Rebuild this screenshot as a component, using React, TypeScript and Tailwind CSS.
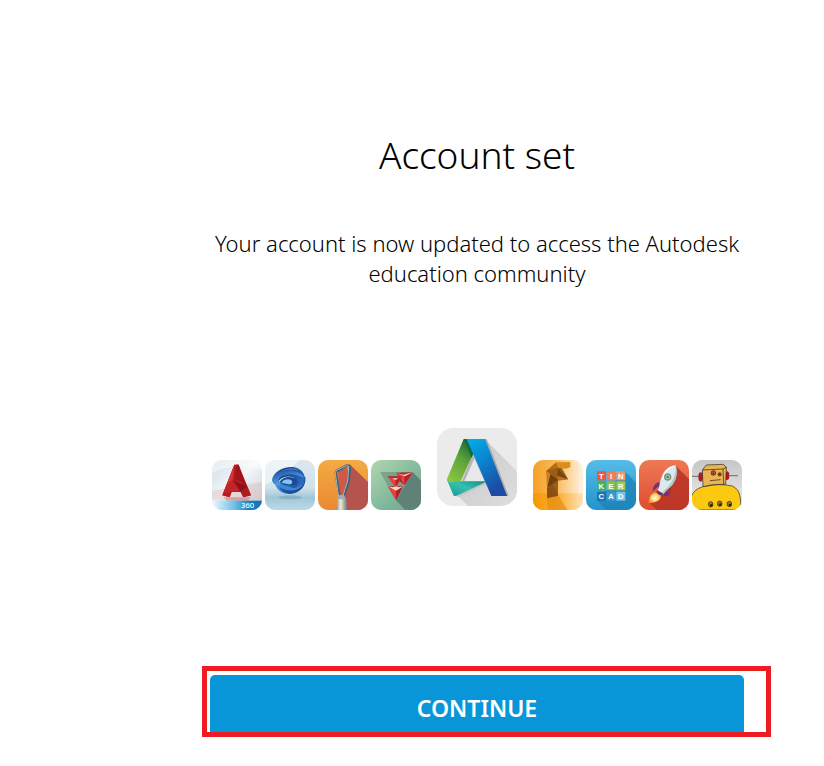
import { FC, ReactNode, useState } from 'react';

type TileProps = {
  id: string;
  label: string;
  children: ReactNode;
};

const Tile: FC<TileProps> = ({ id, label, children }) => (
  <svg
    viewBox="0 0 150 150"
    role="img"
    aria-label={label}
    className="block size-[50px] shrink-0"
  >
    <clipPath id={`${id}-clip`}>
      <rect width="150" height="150" rx="30" />
    </clipPath>
    <g clipPath={`url(#${id}-clip)`}>{children}</g>
  </svg>
);

const Autocad: FC = () => (
  <Tile id="acad" label="AutoCAD 360">
    <linearGradient id="acad-bg" x1="0" y1="0" x2="1" y2="1">
      <stop offset="0" stopColor="#cfdce3" />
      <stop offset="0.45" stopColor="#f4f8fa" />
      <stop offset="1" stopColor="#c3cdd3" />
    </linearGradient>
    <linearGradient id="acad-bar" x1="0" x2="1">
      <stop offset="0" stopColor="#f0faff" />
      <stop offset="0.45" stopColor="#6cbfe6" />
      <stop offset="0.75" stopColor="#1a80bd" />
      <stop offset="1" stopColor="#1773b0" />
    </linearGradient>
    <linearGradient id="acad-a" x1="0" x2="1" y2="1">
      <stop offset="0" stopColor="#d2282c" />
      <stop offset="1" stopColor="#8f1017" />
    </linearGradient>
    <rect width="150" height="150" fill="url(#acad-bg)" />
    <path d="M0 40Q60 5 150 30V0H0Z" fill="#fff" opacity=".45" />
    <path d="M0 92L150 66V122H0Z" fill="#dfb6ba" opacity=".4" />
    <path d="M35 112H116L108 122H44Z" fill="#c7565b" opacity=".4" />
    <path d="M67 14H80L117 106L94 112L86 96H59L53 112L31 106Z" fill="url(#acad-a)" />
    <path d="M67 14L31 106L53 112L58 97L92 78L80 14Z" fill="#b81c22" />
    <path d="M67 14L62 60L44 74Z" fill="#d5363a" />
    <path d="M73 14L68 56L96 68L80 14Z" fill="#a1141a" />
    <path d="M44 74L62 60L106 80L110 92L60 96L34 100Z" fill="#c3242a" />
    <path d="M62 60L106 80L86 96Z" fill="#8d1118" />
    <path d="M106 80L117 106L94 112L86 96Z" fill="#b01a21" />
    <rect y="122" width="150" height="28" fill="url(#acad-bar)" />
    <text
      x="87"
      y="144"
      fill="#fff"
      fontSize="23"
      fontFamily="'Noto Sans', sans-serif"
      fontWeight="500"
    >
      360
    </text>
  </Tile>
);

const Swirl: FC = () => (
  <Tile id="swirl" label="A360">
    <linearGradient id="swirl-bg" x1="0" y1="0" x2="0" y2="1">
      <stop offset="0" stopColor="#dce7ed" />
      <stop offset="0.55" stopColor="#d1e2ea" />
      <stop offset="0.75" stopColor="#a3c6d7" />
      <stop offset="1" stopColor="#b9dae8" />
    </linearGradient>
    <linearGradient id="swirl-top" x1="0" y1="0" x2="1" y2="0.4">
      <stop offset="0" stopColor="#2f74c6" />
      <stop offset="0.45" stopColor="#153f8c" />
      <stop offset="1" stopColor="#2a69bd" />
    </linearGradient>
    <linearGradient id="swirl-low" x1="0" y1="0" x2="1" y2="0">
      <stop offset="0" stopColor="#4c97dc" />
      <stop offset="0.5" stopColor="#2363b6" />
      <stop offset="1" stopColor="#11336f" />
    </linearGradient>
    <linearGradient id="swirl-left" x1="0" y1="0" x2="0.6" y2="1">
      <stop offset="0" stopColor="#1a4a9a" />
      <stop offset="0.6" stopColor="#3f8bd8" />
      <stop offset="1" stopColor="#77b8ee" />
    </linearGradient>
    <rect width="150" height="150" fill="url(#swirl-bg)" />
    <path d="M0 75Q50 55 104 0H0Z" fill="#fff" opacity=".5" />
    <ellipse cx="75" cy="112" rx="36" ry="6" fill="#5d91b2" opacity=".4" />
    <path
      d="M30 72C38 62 106 44 121 52C124 76 107 99 77 102C52 103 36 91 30 72Z"
      fill="url(#swirl-low)"
    />
    <path
      d="M22 61C22 40 48 21 82 21C108 23 124 42 119 66C112 80 98 86 86 84C98 77 101 66 94 57C82 47 54 46 42 62C36 68 41 74 49 76C33 77 23 71 22 61Z"
      fill="url(#swirl-top)"
    />
    <path
      d="M22 61C22 45 43 31 70 31C92 31 110 39 116 53C100 43 69 39 51 49C39 55 36 68 49 76C33 77 23 71 22 61Z"
      fill="url(#swirl-left)"
    />
    <path d="M45 66C51 50 82 46 93 59C98 70 88 77 73 76C59 77 48 72 45 66Z" fill="#184994" />
    <path d="M50 68C58 54 80 56 82 66C82 73 71 75 65 71C58 69 53 70 50 68Z" fill="#86c3f0" />
    <path d="M42 78C56 71 72 82 84 84C96 84 111 77 119 65C111 83 95 94 75 93C60 92 49 87 42 78Z" fill="#3f86d0" />
    <path d="M43 82C57 93 91 98 112 79C103 95 86 102 71 100C58 98 48 92 43 82Z" fill="#1b4f9f" />
    <path d="M51 33C66 23 91 22 103 32C88 29 67 28 51 33Z" fill="#3f80c9" />
  </Tile>
);

const Mudbox: FC = () => (
  <Tile id="tool" label="Mudbox">
    <linearGradient id="tool-bg" x1="0" y1="0" x2="0" y2="1">
      <stop offset="0" stopColor="#f4aa43" />
      <stop offset="1" stopColor="#e98a31" />
    </linearGradient>
    <linearGradient id="tool-grip" x1="0" x2="1">
      <stop offset="0" stopColor="#8b9392" />
      <stop offset="0.4" stopColor="#edebd5" />
      <stop offset="1" stopColor="#6d7a81" />
    </linearGradient>
    <rect width="150" height="150" fill="url(#tool-bg)" />
    <path d="M95 13L150 66V150H83L62 106Z" fill="#b5534f" />
    <path d="M60 32L89 20L85 69L74 111L63 103Z" fill="#cf5a4b" />
    <path
      d="M66 118L54 41Q53 34 61 30L86 17Q96 14 95 26L92 63L74 118"
      fill="none"
      stroke="#425f73"
      strokeWidth="8"
      strokeLinejoin="round"
    />
    <path
      d="M63 116L52 41Q52 32 59 29L86 17Q93 15 92 24L89 63L72 116"
      fill="none"
      stroke="#a9b9b1"
      strokeWidth="3"
      strokeLinejoin="round"
    />
    <path d="M59 117Q71 110 85 117L87 150H55Z" fill="url(#tool-grip)" />
    <path d="M62 106Q71 102 79 106L83 118H60Z" fill="#a5aeaa" />
  </Tile>
);

const ForceEffect: FC = () => (
  <Tile id="tri" label="ForceEffect">
    <linearGradient id="tri-bg" x1="0" y1="0" x2="1" y2="1">
      <stop offset="0" stopColor="#b3d6ad" />
      <stop offset="0.5" stopColor="#87bca0" />
      <stop offset="1" stopColor="#68a18d" />
    </linearGradient>
    <rect width="150" height="150" fill="url(#tri-bg)" />
    <path d="M126 37L150 62V150H103L75 121Z" fill="#5f8177" />
    <path d="M27 36H119L76 121Z" fill="#65867b" opacity=".55" />
    <path d="M77 38L126 37L101 76L87 64Z" fill="#b42029" />
    <path d="M77 38L99 50L126 37L96 44Z" fill="#f4c1ae" />
    <path d="M77 38L100 49L101 76Z" fill="#e44439" />
    <path d="M50 49H94L74 83Z" fill="#be202b" />
    <path d="M50 49L73 60L74 83Z" fill="#e64339" />
    <path d="M50 49L73 60L94 49L84 55H62Z" fill="#ffd8c1" />
    <path d="M51 79H97L75 121Z" fill="#b11e29" />
    <path d="M51 79L75 92L75 121Z" fill="#e54137" />
    <path d="M51 79L66 82L75 79L84 82L97 79L75 92Z" fill="#ffd6c0" />
  </Tile>
);

const AutodeskLogo: FC = () => (
  <svg
    viewBox="0 0 240 237"
    role="img"
    aria-label="Autodesk"
    className="mx-[13px] block h-[79px] w-[80px] shrink-0 self-start"
  >
    <linearGradient id="adsk-blue" x1="0" y1="0" x2="0.5" y2="1">
      <stop offset="0" stopColor="#05aeea" />
      <stop offset="0.45" stopColor="#0a86d0" />
      <stop offset="1" stopColor="#1b4ba2" />
    </linearGradient>
    <linearGradient id="adsk-green" x1="0.7" y1="0" x2="0.2" y2="1">
      <stop offset="0" stopColor="#17683a" />
      <stop offset="0.4" stopColor="#5aa13c" />
      <stop offset="1" stopColor="#8cc63f" />
    </linearGradient>
    <linearGradient id="adsk-teal" x1="0" y1="1" x2="1" y2="0">
      <stop offset="0" stopColor="#13988b" />
      <stop offset="0.5" stopColor="#35bfaf" />
      <stop offset="1" stopColor="#138b83" />
    </linearGradient>
    <linearGradient id="adsk-shade" x1="0" y1="0" x2="1" y2="1">
      <stop offset="0" stopColor="#c6c6c6" />
      <stop offset="1" stopColor="#dedede" />
    </linearGradient>
    <clipPath id="adsk-clip">
      <rect width="240" height="234" rx="48" />
    </clipPath>
    <g clipPath="url(#adsk-clip)">
      <rect width="240" height="234" fill="#ebebeb" />
      <path d="M144 34L240 130V234H93L56 196L106 90Z" fill="url(#adsk-shade)" />
      <path d="M80 160L110 90L142 160Z" fill="#e8e8e8" />
      <path d="M108 75L114 87L82 160H75Z" fill="#b4b4b4" />
      <path d="M141 33H149L215 204H203Z" fill="#aaa" />
      <path d="M57 204L145 163L147 167L64 207Z" fill="#c3c3c3" />
      <path d="M80 33H97L108 78L72 158Q48 166 30 158V153Z" fill="url(#adsk-green)" />
      <path d="M83 33H101L110 75L103 89Z" fill="#17683a" />
      <path d="M30 156Q40 165 56 160H145V163L57 204L50 203Z" fill="url(#adsk-teal)" />
      <path d="M89 33H144L210 204H163Z" fill="url(#adsk-blue)" />
    </g>
  </svg>
);

const Fold: FC = () => (
  <Tile id="fold" label="Fusion 360">
    <linearGradient id="fold-bg" x1="0" x2="1">
      <stop offset="0" stopColor="#f5a123" />
      <stop offset="0.5" stopColor="#f9bd64" />
      <stop offset="1" stopColor="#fff4e2" />
    </linearGradient>
    <linearGradient id="fold-floor" x1="0" x2="1">
      <stop offset="0" stopColor="#f49804" />
      <stop offset="0.55" stopColor="#ffb13a" />
      <stop offset="1" stopColor="#fee4bd" />
    </linearGradient>
    <rect width="150" height="150" fill="url(#fold-bg)" />
    <rect y="100" width="150" height="50" fill="url(#fold-floor)" />
    <path d="M42 114L75 105L104 150H44Z" fill="#df870d" opacity=".6" />
    <path d="M69 7L112 6V22L98 26L76 23Z" fill="#d8901a" />
    <path d="M69 7L76 23L72 41L39 33Z" fill="#b56c16" />
    <path d="M39 33L52 43L42 114L75 107V60L105 58L87 25L76 23Z" fill="#9b5c13" />
    <path d="M39 33L52 43L42 84Z" fill="#cb8020" />
    <path d="M52 43L75 60L42 84Z" fill="#71400d" />
    <path d="M42 84L60 76L75 107L42 114Z" fill="#8c5012" />
    <path d="M75 25L105 58L73 47Z" fill="#754511" />
    <path d="M73 47L105 58L75 62Z" fill="#b7701e" />
  </Tile>
);

const tinkerCells = [
  ['T', '#ed5545', 33, 34],
  ['I', '#ef7f59', 62, 34],
  ['N', '#f09860', 91, 34],
  ['K', '#43b34f', 33, 64],
  ['E', '#87c440', 62, 64],
  ['R', '#a4ca38', 91, 64],
  ['C', '#1973b6', 33, 95],
  ['A', '#3a99d2', 62, 95],
  ['D', '#78c2e8', 91, 95],
] as const;

const Tinkercad: FC = () => (
  <Tile id="tink" label="Tinkercad">
    <linearGradient id="tink-bg" x1="0" y1="0" x2="0" y2="1">
      <stop offset="0" stopColor="#55bce9" />
      <stop offset="1" stopColor="#2395ca" />
    </linearGradient>
    <rect width="150" height="150" fill="url(#tink-bg)" />
    <path d="M116 34L150 68V150H61L33 121Z" fill="#1d82b6" opacity=".75" />
    {tinkerCells.map(([letter, color, x, y]) => (
      <g key={letter}>
        <rect x={x} y={y} width="27" height="27" fill={color} />
        <text
          x={x + 13}
          y={y + 22}
          fill="#fff"
          fontSize="23"
          fontWeight="700"
          fontFamily="'Liberation Sans', sans-serif"
          textAnchor="middle"
        >
          {letter}
        </text>
      </g>
    ))}
  </Tile>
);

const Rocket: FC = () => (
  <Tile id="rocket" label="Rocket">
    <linearGradient id="rocket-bg" x1="0" y1="0" x2="0" y2="1">
      <stop offset="0" stopColor="#ee7955" />
      <stop offset="1" stopColor="#df4d30" />
    </linearGradient>
    <radialGradient id="rocket-fire">
      <stop offset="0" stopColor="#fffbe5" />
      <stop offset="0.5" stopColor="#ffe182" />
      <stop offset="1" stopColor="#f58d32" />
    </radialGradient>
    <rect width="150" height="150" fill="url(#rocket-bg)" />
    <path d="M110 17L150 57V150H55L31 130L70 96Z" fill="#b73225" opacity=".85" />
    <path d="M68 66Q44 64 40 94L50 87Q55 79 63 81Z" fill="#753178" />
    <path d="M86 82L91 95L75 99L74 108L88 109Q98 93 91 75Z" fill="#753178" />
    <path d="M29 130C29 110 40 94 54 97C72 102 68 118 55 124Q42 130 29 130Z" fill="url(#rocket-fire)" />
    <path d="M52 93Q61 84 66 96Q74 98 70 106Q55 106 52 93Z" fill="#6c2b70" />
    <path d="M110 16C84 18 67 35 60 83L55 91L74 101L82 91C111 72 118 44 110 16Z" fill="#dce9ec" />
    <path d="M110 16C113 46 99 73 69 98L74 101L82 91C111 72 118 44 110 16Z" fill="#a9c6cf" />
    <path d="M106 19C88 22 76 36 70 59" fill="none" stroke="#fff" strokeWidth="4" />
    <circle cx="86" cy="51" r="11" fill="#79918e" />
    <circle cx="86" cy="51" r="7" fill="#b7d0a5" />
    <circle cx="86" cy="51" r="4" fill="#4f7c61" />
  </Tile>
);

const Robot: FC = () => (
  <Tile id="robot" label="Instructables">
    <linearGradient id="robot-bg" x1="0" y1="0" x2="0" y2="1">
      <stop offset="0" stopColor="#c6c6c7" />
      <stop offset="1" stopColor="#f0f0f0" />
    </linearGradient>
    <rect width="150" height="150" fill="url(#robot-bg)" />
    <path d="M0 49H22M110 47H138" stroke="#39393a" strokeWidth="2" />
    <ellipse cx="26" cy="51" rx="7" ry="14" fill="#b3182a" />
    <ellipse cx="105" cy="47" rx="7" ry="13" fill="#b3182a" />
    <g stroke="#292114" strokeWidth="2" strokeLinejoin="round">
      <path
        d="M-3 150V112Q4 88 33 80Q82 69 121 78Q142 88 145 114L148 150Z"
        fill="#fcc911"
      />
      <path d="M31 30L43 15L94 13L103 22L101 73Q62 71 33 80Z" fill="#e8b555" />
      <path d="M31 30L93 27L103 22M93 27L95 72" fill="none" />
      <circle cx="64" cy="39" r="7" fill="#c9483c" />
      <circle cx="83" cy="43" r="5" fill="#c9483c" />
      <path d="M54 62L86 59" fill="none" />
      <ellipse cx="56" cy="133" rx="7" ry="8" fill="#a37c2b" />
      <ellipse cx="83" cy="131" rx="7" ry="8" fill="#a37c2b" />
      <ellipse cx="112" cy="132" rx="7" ry="8" fill="#a37c2b" />
    </g>
    <g fill="#292114">
      <circle cx="64" cy="40" r="2" />
      <circle cx="83" cy="43" r="2" />
      <circle cx="58" cy="136" r="4" />
      <circle cx="85" cy="134" r="4" />
      <circle cx="114" cy="135" r="4" />
    </g>
  </Tile>
);

const App: FC = () => {
  const [done, setDone] = useState(false);

  return (
    <main className="min-h-screen bg-white pt-[130px] pr-[53px] pl-[202px] font-['Noto_Sans',sans-serif] text-black">
      <div className="pr-[27px] pl-2 text-center">
        <h1 className="text-[37px] leading-[50px] font-light">Account set</h1>
        <p className="mt-12 text-[22px] leading-[30px] font-light">
          Your account is now updated to access the Autodesk education community
        </p>
        <div className="mt-[140px] flex min-h-[82px] items-end justify-center gap-[3px]">
          <Autocad />
          <Swirl />
          <Mudbox />
          <ForceEffect />
          <AutodeskLogo />
          <Fold />
          <Tinkercad />
          <Rocket />
          <Robot />
        </div>
      </div>

      <div className="mt-[156px] h-[71px] overflow-hidden border-[5px] border-[#ed1c24] pt-1 pr-[22px] pl-[3px]">
        <button
          type="button"
          aria-pressed={done}
          onClick={() => setDone(true)}
          className="block h-[66px] w-full rounded-[5px] bg-[#0896d8] text-[23px] font-semibold text-white"
        >
          CONTINUE
        </button>
      </div>
    </main>
  );
};

export default App;
